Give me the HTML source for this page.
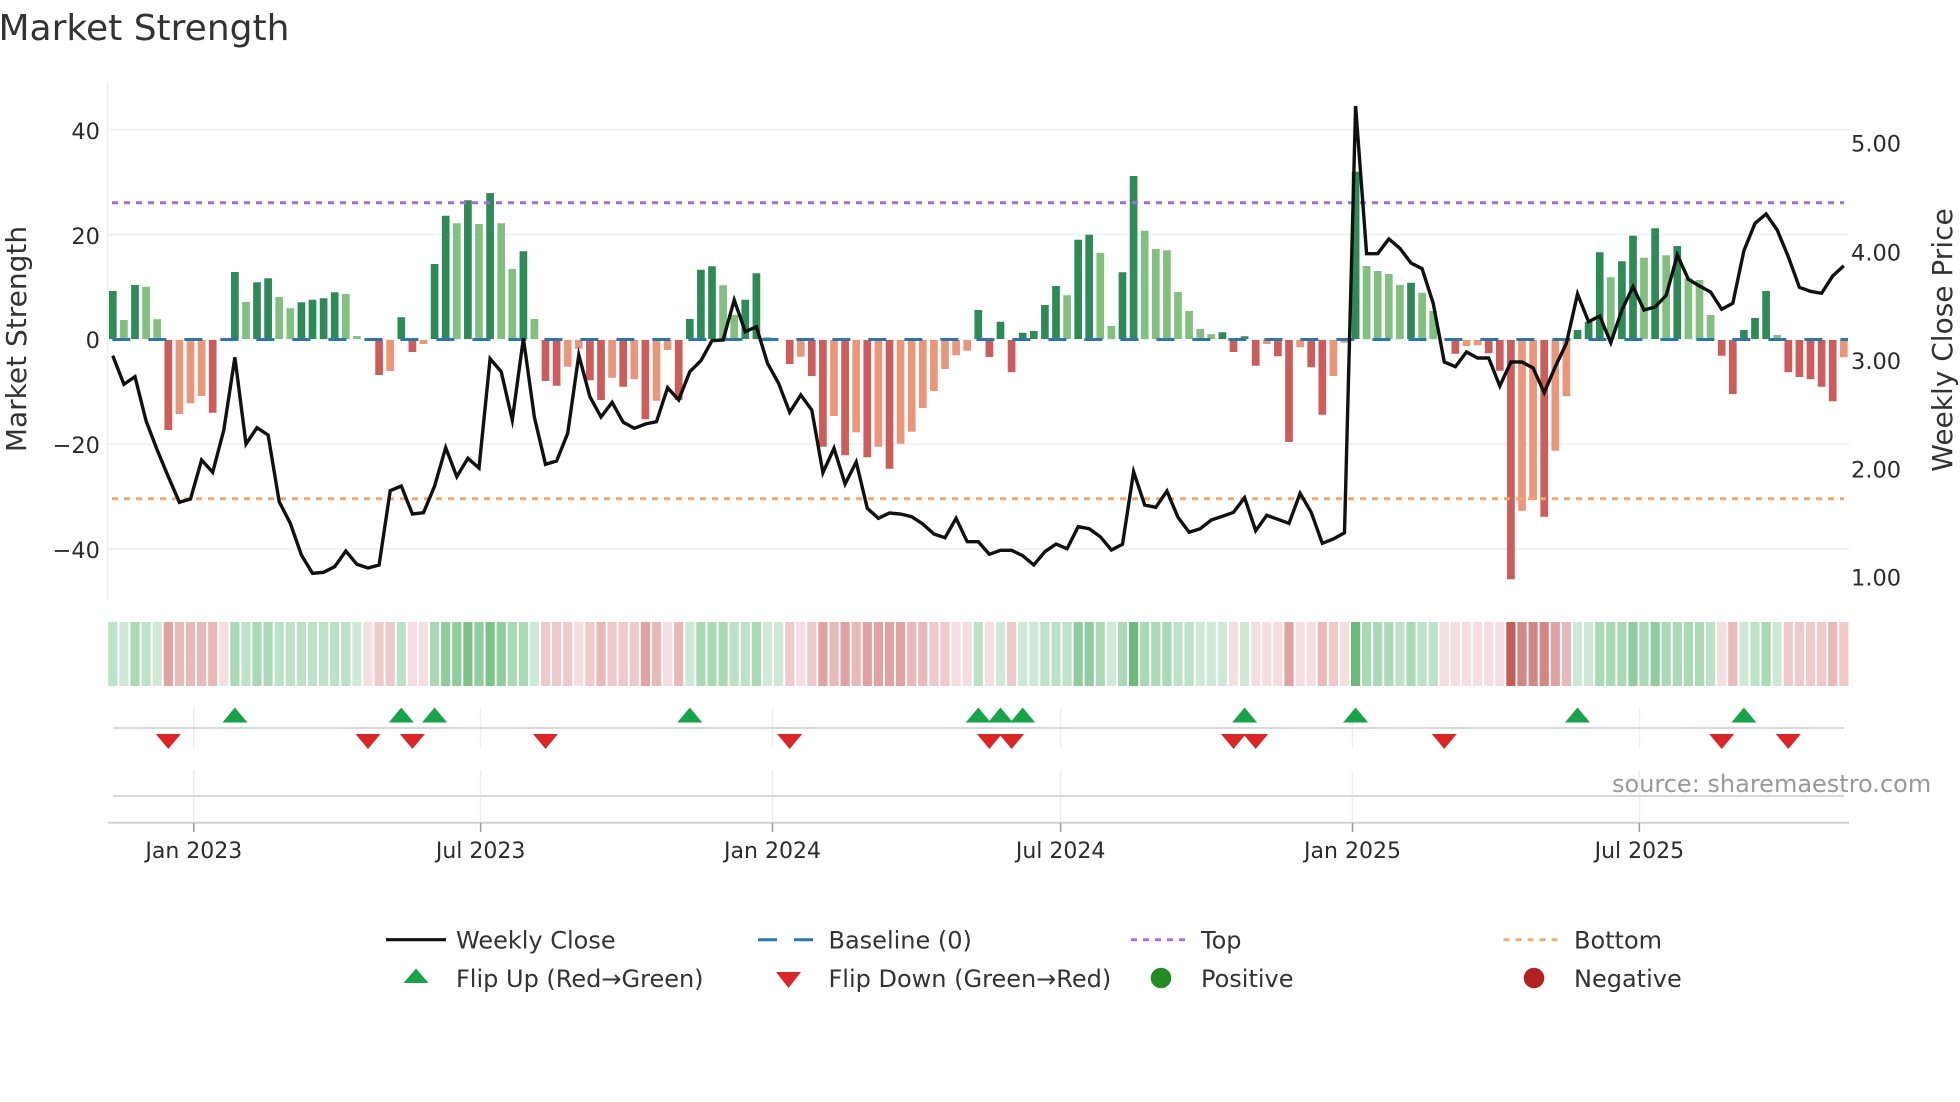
<!DOCTYPE html>
<html lang="en"><head><meta charset="utf-8"><title>Market Strength</title>
<style>html,body{margin:0;padding:0;background:#fff}svg{display:block;filter:blur(.35px)}text{font-family:"DejaVu Sans","Liberation Sans",sans-serif}</style></head>
<body>
<svg xmlns="http://www.w3.org/2000/svg" width="1960" height="1102" viewBox="0 0 1960 1102">
<rect width="1960" height="1102" fill="#fff"/>
<text x="-1.5" y="40" font-size="36" fill="#333">Market Strength</text>
<!-- axes and grid -->
<path d="M107.5 82V600" stroke="#eff1f3" stroke-width="2" fill="none"/>
<path d="M108 129.6H1849M108 234.6H1849M108 444.3H1849M108 549.2H1849" stroke="#f0f2f5" stroke-width="2" fill="none"/>
<path d="M108 339.5H1849" stroke="#eef4f2" stroke-width="2" fill="none"/>
<!-- bars -->
<g fill="none" stroke-width="7.7">
<path stroke="#2e8b57" d="M112.8 291V339M135 285V339M234.9 272V339M257 282.3V339M268.1 278.3V339M301.4 302.3V339M312.5 299.7V339M323.6 298.3V339M334.7 292.3V339M401.3 317.3V339M434.6 264V339M445.7 215.7V339M467.9 200.3V339M490.1 193V339M523.4 251.3V339M689.8 319V339M700.9 269.7V339M712 266.3V339M745.3 299.7V339M756.4 273.3V339M978.3 310V339M1000.5 321.7V339M1022.7 332.7V339M1033.8 331V339M1044.9 305V339M1056 286V339M1078.2 239.7V339M1089.2 234.7V339M1122.5 272.3V339M1133.6 176V339M1222.4 332.3V339M1244.6 336.3V339M1355.6 171.7V339M1411 282.7V339M1577.5 330V339M1588.6 321.7V339M1599.7 252.3V339M1621.9 261.3V339M1633 235.7V339M1655.1 228.3V339M1677.3 246V339M1743.9 330V339M1755 318V339M1766.1 291V339"/>
<path stroke="#82bf80" d="M123.9 320V339M146.1 286.7V339M157.2 319.3V339M246 302V339M279.2 297V339M290.3 308.3V339M345.8 294V339M356.9 336V339M456.8 223.3V339M479 224V339M501.2 223.3V339M512.3 269V339M534.4 319V339M723.1 285.3V339M734.2 315V339M767.5 337.3V339M1067.1 295.3V339M1100.3 252.7V339M1111.4 326V339M1144.7 230.7V339M1155.8 249V339M1166.9 250.3V339M1178 292V339M1189.1 311V339M1200.2 329V339M1211.3 334.3V339M1366.6 266V339M1377.7 271V339M1388.8 274V339M1399.9 285V339M1422.1 292.7V339M1433.2 311V339M1610.8 277.3V339M1644 257.7V339M1666.2 255.3V339M1688.4 278.3V339M1699.5 280V339M1710.6 315V339M1777.2 335V339"/>
<path stroke="#cd5c5c" d="M168.3 340V430M212.7 340V412.7M379.1 340V375M412.4 340V352M545.5 340V381M556.6 340V385.7M589.9 340V380.3M601 340V400M623.2 340V386.7M645.4 340V419.3M678.7 340V400M789.7 340V364M811.8 340V376M822.9 340V446.7M845.1 340V455.3M867.3 340V457.3M889.5 340V468.7M989.4 340V357M1011.6 340V372.3M1233.5 340V352M1255.7 340V365.7M1277.9 340V356.3M1289 340V442M1311.2 340V367.3M1322.3 340V414.7M1455.4 340V353.7M1488.7 340V353.3M1499.8 340V370.7M1510.9 340V579.3M1544.2 340V516.7M1721.7 340V355.7M1732.8 340V394M1788.3 340V372.3M1799.4 340V377M1810.5 340V379.3M1821.6 340V386.7M1832.7 340V401.3"/>
<path stroke="#e9967a" d="M179.4 340V414M190.5 340V403.3M201.6 340V396M223.8 340V341M390.2 340V371M423.5 340V344M567.7 340V366.7M578.8 340V348.7M612.1 340V377.7M634.3 340V379.3M656.5 340V400.7M667.6 340V350M800.8 340V356.7M834 340V416M856.2 340V432.3M878.4 340V446.7M900.6 340V443.7M911.7 340V431.7M922.8 340V408M933.9 340V391M945 340V369M956.1 340V355.3M967.2 340V350.7M1266.8 340V344M1300.1 340V347.3M1333.4 340V376M1344.5 340V342.7M1466.5 340V346M1477.6 340V345.3M1522 340V510.7M1533.1 340V500M1555.3 340V450.7M1566.4 340V396.3M1843.8 340V357.3"/>
</g>
<!-- reference lines -->
<path d="M112.4 339.5H1848" stroke="#2b78a8" stroke-width="3" stroke-dasharray="18 18" fill="none"/>
<path d="M112 202.7H1844" stroke="#a06edc" stroke-width="3" stroke-dasharray="6 6" fill="none"/>
<path d="M112 498.7H1844" stroke="#f3a76c" stroke-width="3" stroke-dasharray="6 6" fill="none"/>
<!-- weekly close -->
<polyline fill="none" stroke="#111" stroke-width="3.4" stroke-linejoin="miter" stroke-miterlimit="6" points="112.8,355.7 123.9,384.3 135,376.7 146.1,421 157.2,450 168.3,476.7 179.4,502.3 190.5,499 201.6,460 212.7,472.3 223.8,430 234.9,357.3 246,444 257,427.7 268.1,435 279.2,501.7 290.3,523.3 301.4,555 312.5,573.3 323.6,572.3 334.7,566.7 345.8,551 356.9,564.3 368,568 379.1,565 390.2,490.7 401.3,486 412.4,514 423.5,512.7 434.6,486 445.7,447.7 456.8,476.7 467.9,458.3 479,468 490.1,358.7 501.2,371.7 512.3,420 523.4,338.3 534.4,417.3 545.5,464.3 556.6,461 567.7,433.3 578.8,355 589.9,396.7 601,417 612.1,402.3 623.2,422.3 634.3,428.3 645.4,424 656.5,421.7 667.6,387.7 678.7,400 689.8,371.7 700.9,360.7 712,340.7 723.1,340 734.2,300 745.3,331.7 756.4,326.7 767.5,363.3 778.6,383.3 789.7,412.3 800.8,395 811.8,410 822.9,472.7 834,448.3 845.1,484 856.2,462 867.3,508.3 878.4,518.3 889.5,513 900.6,514 911.7,516.7 922.8,524 933.9,534 945,537.7 956.1,518.3 967.2,541.7 978.3,541.7 989.4,554.3 1000.5,550.3 1011.6,550.3 1022.7,555.7 1033.8,565 1044.9,551.7 1056,544 1067.1,548.7 1078.2,526.7 1089.2,528.7 1100.3,536.7 1111.4,550 1122.5,544.3 1133.6,471.7 1144.7,505 1155.8,507.3 1166.9,491 1178,517.3 1189.1,532.3 1200.2,528.7 1211.3,520 1222.4,516.3 1233.5,512.3 1244.6,497.7 1255.7,530.7 1266.8,515.3 1277.9,519.3 1289,523.3 1300.1,493.3 1311.2,512.3 1322.3,543.3 1333.4,539 1344.5,532.7 1355.6,106 1366.6,253.7 1377.7,253.7 1388.8,239 1399.9,248.3 1411,263 1422.1,268.7 1433.2,303.3 1444.3,362 1455.4,366.7 1466.5,352 1477.6,358 1488.7,358 1499.8,386 1510.9,362 1522,362 1533.1,368 1544.2,392.7 1555.3,366.7 1566.4,343.3 1577.5,294 1588.6,321.7 1599.7,316 1610.8,342.7 1621.9,310 1633,286.7 1644,310 1655.1,307 1666.2,295.3 1677.3,255 1688.4,279.3 1699.5,286 1710.6,292 1721.7,309.3 1732.8,303.3 1743.9,250.7 1755,223.3 1766.1,214 1777.2,230 1788.3,256.7 1799.4,287.3 1810.5,291.3 1821.6,293.3 1832.7,276 1843.8,265.7"/>
<!-- y ticks -->
<g font-size="22.5" fill="#2b2b2b" text-anchor="end">
<text x="100" y="139">40</text><text x="100" y="244">20</text><text x="100" y="348">0</text><text x="100" y="453">−20</text><text x="100" y="558">−40</text>
</g>
<g font-size="22.5" fill="#2b2b2b">
<text x="1851" y="151.5">5.00</text><text x="1851" y="260.5">4.00</text><text x="1851" y="369">3.00</text><text x="1851" y="477.5">2.00</text><text x="1851" y="585.5">1.00</text>
</g>
<text font-size="28" fill="#333" text-anchor="middle" transform="translate(26 339) rotate(-90)">Market Strength</text>
<text font-size="28" fill="#333" text-anchor="middle" transform="translate(1952 340) rotate(-90)">Weekly Close Price</text>
<!-- heat strip -->
<g fill="none" stroke-width="9.2">
<path stroke="#cfe9d7" d="M123.9 622V686M157.2 622V686M356.9 622V686M534.4 622V686M689.8 622V686M767.5 622V686M778.6 622V686M1000.5 622V686M1022.7 622V686M1033.8 622V686M1111.4 622V686M1200.2 622V686M1211.3 622V686M1222.4 622V686M1244.6 622V686M1577.5 622V686M1588.6 622V686M1743.9 622V686M1777.2 622V686"/>
<path stroke="#bde2c8" d="M112.8 622V686M146.1 622V686M246 622V686M279.2 622V686M290.3 622V686M301.4 622V686M312.5 622V686M323.6 622V686M334.7 622V686M345.8 622V686M401.3 622V686M734.2 622V686M745.3 622V686M978.3 622V686M1044.9 622V686M1056 622V686M1067.1 622V686M1178 622V686M1189.1 622V686M1399.9 622V686M1422.1 622V686M1433.2 622V686M1710.6 622V686M1755 622V686"/>
<path stroke="#aad9b6" d="M135 622V686M234.9 622V686M257 622V686M268.1 622V686M434.6 622V686M512.3 622V686M523.4 622V686M700.9 622V686M712 622V686M723.1 622V686M756.4 622V686M1100.3 622V686M1122.5 622V686M1144.7 622V686M1155.8 622V686M1166.9 622V686M1366.6 622V686M1377.7 622V686M1388.8 622V686M1411 622V686M1599.7 622V686M1610.8 622V686M1621.9 622V686M1644 622V686M1666.2 622V686M1677.3 622V686M1688.4 622V686M1699.5 622V686M1766.1 622V686"/>
<path stroke="#90cc9e" d="M445.7 622V686M456.8 622V686M479 622V686M501.2 622V686M1078.2 622V686M1089.2 622V686M1633 622V686M1655.1 622V686"/>
<path stroke="#7bc28b" d="M467.9 622V686M490.1 622V686"/>
<path stroke="#6cb97c" d="M1133.6 622V686M1355.6 622V686"/>
<path stroke="#f4dedf" d="M223.8 622V686M368 622V686M412.4 622V686M423.5 622V686M578.8 622V686M667.6 622V686M800.8 622V686M956.1 622V686M967.2 622V686M989.4 622V686M1233.5 622V686M1255.7 622V686M1266.8 622V686M1277.9 622V686M1300.1 622V686M1311.2 622V686M1344.5 622V686M1444.3 622V686M1455.4 622V686M1466.5 622V686M1477.6 622V686M1488.7 622V686M1499.8 622V686M1721.7 622V686"/>
<path stroke="#eecaca" d="M379.1 622V686M390.2 622V686M545.5 622V686M556.6 622V686M567.7 622V686M589.9 622V686M612.1 622V686M623.2 622V686M634.3 622V686M789.7 622V686M811.8 622V686M933.9 622V686M945 622V686M1011.6 622V686M1333.4 622V686M1788.3 622V686M1799.4 622V686M1810.5 622V686M1821.6 622V686M1843.8 622V686"/>
<path stroke="#e8b9b9" d="M179.4 622V686M190.5 622V686M201.6 622V686M212.7 622V686M601 622V686M656.5 622V686M678.7 622V686M834 622V686M856.2 622V686M911.7 622V686M922.8 622V686M1322.3 622V686M1566.4 622V686M1732.8 622V686M1832.7 622V686"/>
<path stroke="#e0a3a3" d="M168.3 622V686M645.4 622V686M822.9 622V686M845.1 622V686M867.3 622V686M878.4 622V686M889.5 622V686M900.6 622V686M1289 622V686M1555.3 622V686"/>
<path stroke="#d18784" d="M1522 622V686M1533.1 622V686M1544.2 622V686"/>
<path stroke="#c55d57" d="M1510.9 622V686"/>
</g>
<!-- timeline grid -->
<g stroke="#eceef2" stroke-width="1.5" fill="none">
<path d="M193.8 708V748M193.8 770V823M480.6 708V748M480.6 770V823M772.5 708V748M772.5 770V823M1060.6 708V748M1060.6 770V823M1352.5 708V748M1352.5 770V823M1639.4 708V748M1639.4 770V823"/>
</g>
<path d="M113 728H1844M113 796H1844" stroke="#d5d8dc" stroke-width="2" fill="none"/>
<path d="M108 822.8H1849" stroke="#d0d3d6" stroke-width="2" fill="none"/>
<path d="M193.8 823V832M480.6 823V832M772.5 823V832M1060.6 823V832M1352.5 823V832M1639.4 823V832" stroke="#9a9a9a" stroke-width="1.5" fill="none"/>
<!-- flip up -->
<g fill="#16a34a">
<polygon points="234.9,707.5 247.4,722.5 222.4,722.5"/><polygon points="401.3,707.5 413.8,722.5 388.8,722.5"/><polygon points="434.6,707.5 447.1,722.5 422.1,722.5"/><polygon points="689.8,707.5 702.3,722.5 677.3,722.5"/><polygon points="978.3,707.5 990.8,722.5 965.8,722.5"/><polygon points="1000.5,707.5 1013,722.5 988,722.5"/><polygon points="1022.7,707.5 1035.2,722.5 1010.2,722.5"/><polygon points="1244.6,707.5 1257.1,722.5 1232.1,722.5"/><polygon points="1355.6,707.5 1368.1,722.5 1343.1,722.5"/><polygon points="1577.5,707.5 1590,722.5 1565,722.5"/><polygon points="1743.9,707.5 1756.4,722.5 1731.4,722.5"/>
</g>
<!-- flip down -->
<g fill="#dc2626">
<polygon points="155.8,734 180.8,734 168.3,749"/><polygon points="355.5,734 380.5,734 368,749"/><polygon points="399.9,734 424.9,734 412.4,749"/><polygon points="533,734 558,734 545.5,749"/><polygon points="777.2,734 802.2,734 789.7,749"/><polygon points="976.9,734 1001.9,734 989.4,749"/><polygon points="999.1,734 1024.1,734 1011.6,749"/><polygon points="1221,734 1246,734 1233.5,749"/><polygon points="1243.2,734 1268.2,734 1255.7,749"/><polygon points="1431.8,734 1456.8,734 1444.3,749"/><polygon points="1709.2,734 1734.2,734 1721.7,749"/><polygon points="1775.8,734 1800.8,734 1788.3,749"/>
</g>
<!-- x labels -->
<g font-size="22" fill="#2b2b2b" text-anchor="middle">
<text x="193.8" y="858">Jan 2023</text><text x="480.6" y="858">Jul 2023</text><text x="772.5" y="858">Jan 2024</text><text x="1060.6" y="858">Jul 2024</text><text x="1352.5" y="858">Jan 2025</text><text x="1639.4" y="858">Jul 2025</text>
</g>
<text x="1612" y="792" font-size="24" fill="#999">source: sharemaestro.com</text>
<!-- legend -->
<path d="M386 939.7H446" stroke="#111" stroke-width="3.2" fill="none"/>
<path d="M758 939.7H814" stroke="#2b78a8" stroke-width="3" stroke-dasharray="19 17" fill="none"/>
<path d="M1131 939.7H1187" stroke="#a56fe0" stroke-width="3" stroke-dasharray="6 6" fill="none"/>
<path d="M1503.6 939.7H1559" stroke="#f3ab75" stroke-width="3" stroke-dasharray="6 6" fill="none"/>
<polygon points="416,968.5 428.5,983 403.5,983" fill="#16a34a"/>
<polygon points="776,972 801,972 788.5,988" fill="#dc2626"/>
<circle cx="1161" cy="978" r="10.3" fill="#228b22"/>
<circle cx="1534" cy="978" r="10.3" fill="#b22222"/>
<g font-size="24" fill="#333">
<text x="456" y="948.7">Weekly Close</text><text x="828.5" y="948.7">Baseline (0)</text><text x="1201" y="948.7">Top</text><text x="1574" y="948.7">Bottom</text>
<text x="456" y="987">Flip Up (Red→Green)</text><text x="828.5" y="987">Flip Down (Green→Red)</text><text x="1201" y="987">Positive</text><text x="1574" y="987">Negative</text>
</g>
</svg>
</body></html>
